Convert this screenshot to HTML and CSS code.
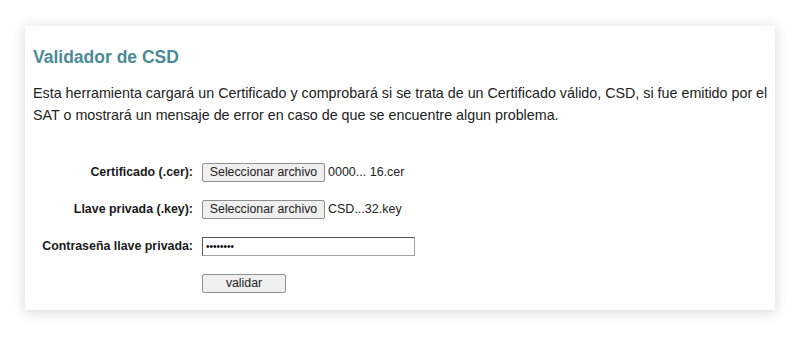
FILE: index.html
```html
<!DOCTYPE html>
<html lang="es">
<head>
  <meta charset="UTF-8">
  <title>Validador de CSD</title>
  <link rel="stylesheet" href="styles.css">
</head>
<body>

<div class="card">
  <h1>Validador de CSD</h1>
  <p class="intro">Esta herramienta cargará un Certificado y comprobará si se trata de un Certificado válido, CSD, si fue emitido por el SAT o mostrará un mensaje de error en caso de que se encuentre algun problema.</p>

  <form class="form">
    <label>Certificado (.cer):</label>
    <div class="field">
      <button type="button" class="file-btn">Seleccionar archivo</button>
      <span class="file-name">0000... 16.cer</span>
    </div>

    <label>Llave privada (.key):</label>
    <div class="field">
      <button type="button" class="file-btn">Seleccionar archivo</button>
      <span class="file-name">CSD...32.key</span>
    </div>

    <label>Contraseña llave privada:</label>
    <div class="field">
      <input type="password" class="pass" value="12345678">
    </div>

    <span></span>
    <div class="field">
      <button type="button" class="submit-btn">validar</button>
    </div>
  </form>
</div>

</body>
</html>
```

FILE: styles.css
```css
body {
  margin: 0;
  padding: 26px 25px 27px 25px;
  background: #fff;
  font-family: "Liberation Sans", Arial, sans-serif;
  color: #222;
}
.card {
  width: 750px;
  height: 284px;
  box-sizing: border-box;
  padding: 19px 2px 0 8px;
  background: #fff;
  box-shadow: 0 2px 12px rgba(0, 0, 0, 0.17);
}
h1 {
  margin: 0;
  font-size: 17.5px;
  font-weight: bold;
  color: #4b8a96;
  line-height: 24px;
}
.intro {
  margin: 13px 0 0 0;
  font-size: 14.3px;
  line-height: 22px;
  color: #222;
}
.form {
  display: grid;
  grid-template-columns: 160px auto;
  column-gap: 9px;
  row-gap: 17px;
  margin-top: 36px;
  align-items: center;
}
.form label {
  text-align: right;
  font-size: 12.4px;
  font-weight: bold;
  color: #1a1a1a;
}
.field {
  display: flex;
  align-items: center;
  height: 20px;
}
.file-btn, .submit-btn {
  font-family: "Liberation Sans", Arial, sans-serif;
  font-size: 12.3px;
  color: #222;
  background: #efefef;
  border: 1px solid #8f8f8f;
  border-radius: 2px;
  height: 19px;
  padding: 0 4px;
}
.file-btn {
  width: 123px;
}
.file-name {
  margin-left: 3px;
  font-size: 12.5px;
  color: #222;
}
.pass {
  width: 213px;
  height: 19px;
  box-sizing: border-box;
  border: 1px solid #a0a0a0;
  border-top-color: #555;
  border-left-color: #555;
  padding: 0 3px;
  font-size: 10px;
  font-family: "Liberation Sans", Arial, sans-serif;
}
.submit-btn {
  width: 84px;
}
```
